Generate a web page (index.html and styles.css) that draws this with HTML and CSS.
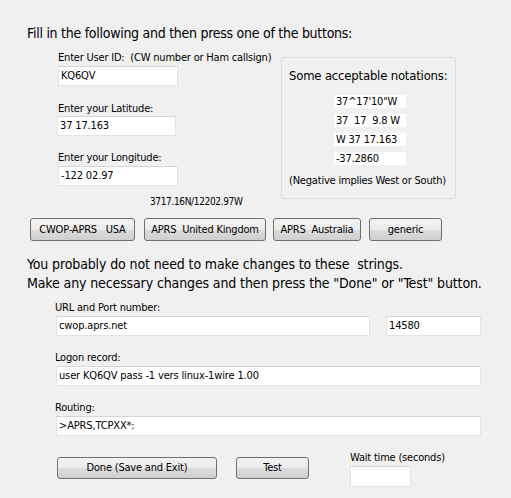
FILE: index.html
```html
<!DOCTYPE html>
<html>
<head>
<meta charset="utf-8">
<link rel="stylesheet" href="styles.css">
</head>
<body>
<div class="page">
  <div class="title">Fill in the following and then press one of the buttons:</div>
  <div class="top-row">
    <div class="fields">
      <div class="label">Enter User ID:&nbsp; (CW number or Ham callsign)</div>
      <div class="input in-id">KQ6QV</div>
      <div class="label lbl-lat">Enter your Latitude:</div>
      <div class="input in-lat">37 17.163</div>
      <div class="label lbl-lon">Enter your Longitude:</div>
      <div class="input in-lon">-122 02.97</div>
      <div class="coords">3717.16N/12202.97W</div>
    </div>
    <div class="notes">
      <div class="notes-title">Some acceptable notations:</div>
      <div class="note-list">
        <div class="note">37^17'10"W</div>
        <div class="note">37&nbsp; 17&nbsp; 9.8 W</div>
        <div class="note">W 37 17.163</div>
        <div class="note">-37.2860</div>
      </div>
      <div class="notes-foot">(Negative implies West or South)</div>
    </div>
  </div>
  <div class="btn-row">
    <div class="btn b1">CWOP-APRS&nbsp;&nbsp; USA</div>
    <div class="btn b2">APRS&nbsp; United Kingdom</div>
    <div class="btn b3">APRS&nbsp; Australia</div>
    <div class="btn b4">generic</div>
  </div>
  <div class="info">
    <div>You probably do not need to make changes to these&nbsp; strings.</div>
    <div>Make any necessary changes and then press the "Done" or "Test" button.</div>
  </div>
  <div class="bottom">
    <div class="label">URL and Port number:</div>
    <div class="url-row">
      <div class="input in-url">cwop.aprs.net</div>
      <div class="input in-port">14580</div>
    </div>
    <div class="label lbl-b">Logon record:</div>
    <div class="input in-wide">user KQ6QV pass -1 vers linux-1wire 1.00</div>
    <div class="label lbl-b">Routing:</div>
    <div class="input in-wide">&gt;APRS,TCPXX*:</div>
    <div class="action-row">
      <div class="btn b-done">Done (Save and Exit)</div>
      <div class="btn b-test">Test</div>
      <div class="wait">
        <div class="label">Wait time (seconds)</div>
        <div class="input in-wait"></div>
      </div>
    </div>
  </div>
</div>
</body>
</html>
```
FILE: styles.css
```css
html, body {
  margin: 0;
  padding: 0;
  background: #f0f0f0;
}
body {
  font-family: "DejaVu Sans Condensed", "DejaVu Sans", sans-serif;
  color: #000;
  width: 511px;
  height: 498px;
  overflow: hidden;
}
.page {
  padding: 24px 0 0 27px;
}
.title {
  font-size: 14px;
  line-height: 18px;
  height: 18px;
  letter-spacing: -0.27px;
  white-space: nowrap;
}
.top-row {
  display: flex;
  align-items: flex-start;
}
.fields {
  width: 254px;
  padding-left: 31px;
  padding-top: 9px;
  box-sizing: border-box;
}
.label {
  font-size: 11px;
  line-height: 13px;
  height: 13px;
  letter-spacing: -0.2px;
  white-space: nowrap;
}
.input {
  box-sizing: border-box;
  background: #fff;
  border: 1px solid #e2e3ea;
  border-top-color: #d3d6dd;
  height: 20px;
  font-size: 11px;
  line-height: 18px;
  padding-left: 2px;
  letter-spacing: -0.15px;
  white-space: nowrap;
}
.in-id { width: 120px; margin-top: 2px; }
.lbl-lat { margin-top: 16px; }
.in-lat { width: 119px; margin-top: 1px; margin-left: -1px; }
.lbl-lon { margin-top: 15px; }
.in-lon { width: 120px; margin-top: 2px; }
.coords {
  font-size: 10px;
  line-height: 12px;
  height: 12px;
  margin-top: 10px;
  margin-left: 92px;
  letter-spacing: -0.35px;
  white-space: nowrap;
}
.notes {
  margin-top: 15px;
  width: 175px;
  height: 142px;
  box-sizing: border-box;
  border: 1px solid #d5dfe5;
  border-radius: 3px;
  padding: 10px 0 0 7px;
}
.notes-title {
  font-size: 13px;
  line-height: 16px;
  height: 16px;
  letter-spacing: -0.2px;
  white-space: nowrap;
}
.note-list {
  display: flex;
  flex-direction: column;
  gap: 6px;
  margin-top: 11px;
  margin-left: 45px;
}
.note {
  width: 72px;
  height: 13px;
  background: #fff;
  font-size: 11px;
  line-height: 13px;
  padding-left: 2px;
  box-sizing: border-box;
  letter-spacing: -0.2px;
  white-space: nowrap;
}
.notes-foot {
  font-size: 11px;
  line-height: 13px;
  margin-top: 9px;
  letter-spacing: -0.2px;
  white-space: nowrap;
}
.btn-row {
  display: flex;
  margin-top: 10px;
  margin-left: 3px;
}
.btn {
  box-sizing: border-box;
  height: 23px;
  border: 1px solid #707070;
  border-radius: 3px;
  background: linear-gradient(#f2f2f2 0%, #ebebeb 50%, #dddddd 51%, #cfcfcf 100%);
  font-size: 11px;
  line-height: 21px;
  letter-spacing: -0.2px;
  text-align: center;
  white-space: nowrap;
}
.b1 { width: 105px; }
.b2 { width: 122px; margin-left: 9px; }
.b3 { width: 88px; margin-left: 7px; }
.b4 { width: 73px; margin-left: 8px; }
.info {
  margin-top: 14px;
  font-size: 14px;
  line-height: 19px;
  letter-spacing: -0.12px;
  white-space: nowrap;
}
.bottom {
  padding-left: 28px;
  margin-top: 8px;
}
.url-row {
  display: flex;
  gap: 16px;
  margin-top: 2px;
  margin-left: 1px;
}
.in-url { width: 314px; }
.in-port { width: 95px; }
.lbl-b { margin-top: 15px; }
.in-wide { width: 425px; margin-top: 2px; margin-left: 1px; }
.action-row {
  display: flex;
  align-items: flex-start;
  margin-top: 15px;
}
.b-done { width: 160px; height: 22px; line-height: 20px; margin-top: 6px; margin-left: 2px; }
.b-test { width: 73px; height: 22px; line-height: 20px; margin-top: 6px; margin-left: 19px; }
.wait { margin-left: 41px; }
.in-wait { width: 61px; height: 21px; margin-top: 2px; }
```
